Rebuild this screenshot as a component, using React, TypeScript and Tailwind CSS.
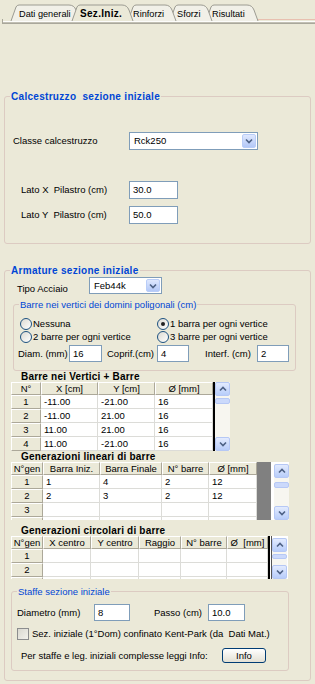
import type { ReactNode } from "react";
import clsx from "clsx";

const tabPath = (l: number, r: number) =>
  `M${l} 21 L${l + 5} 7 Q${l + 6} 5 ${l + 8} 5 L${r - 11} 5 Q${r - 6} 5 ${r - 4} 10 L${r} 21`;

function TabStrip() {
  // drawn right to left so the left tabs overlap, selected one last
  const back = [
    { l: 206, r: 258 },
    { l: 170, r: 212 },
    { l: 128, r: 176 },
    { l: 11, r: 80 },
  ];
  return (
    <div className="relative h-[25px]">
      <svg className="absolute inset-0" width="315" height="25">
        <rect x="258" y="19" width="57" height="1" fill="#e8c0b0" />
        {back.map((t) => (
          <g key={t.l}>
            <path d={tabPath(t.l, t.r) + " Z"} fill="#f1f0e8" />
            <path d={tabPath(t.l, t.r)} fill="none" stroke="#9c9b92" />
          </g>
        ))}
        <path d={tabPath(72, 133) + " Z"} fill="#ebe9d8" />
        <path d={tabPath(72, 133)} fill="none" stroke="#9c9b92" />
        <rect x="2" y="21" width="313" height="1" fill="#fdfdfb" />
        <rect x="2" y="22" width="313" height="1" fill="#c2c0b4" />
        <rect x="2" y="23" width="313" height="1" fill="#a9a79b" />
        <rect x="2" y="19" width="1" height="5" fill="#a9a79b" />
      </svg>
      <div className="relative flex pt-[8px] text-[9.2px]">
        <span className="w-[19px]" />
        <span className="w-[61px]">Dati generali</span>
        <span className="w-[53px] text-[10px] font-bold tracking-[0.3px]">Sez.Iniz.</span>
        <span className="w-[44px]">Rinforzi</span>
        <span className="w-[35px]">Sforzi</span>
        <span>Risultati</span>
      </div>
    </div>
  );
}

function Chevron({ up }: { up?: boolean }) {
  return (
    <svg width="8" height="6" viewBox="0 0 8 6">
      <path
        d={up ? "M1 4.5 L4 1.5 L7 4.5" : "M1 1.5 L4 4.5 L7 1.5"}
        fill="none"
        stroke="#4d6185"
        strokeWidth="1.6"
      />
    </svg>
  );
}

function Combo({ value, className }: { value: string; className: string }) {
  return (
    <div className={clsx("flex border border-[#7f9db9] bg-white p-px", className)}>
      <span className="flex-1 self-center pl-[3px]">{value}</span>
      <div className="flex w-[14px] items-center justify-center rounded-[2px] border border-[#b9cdf8] bg-gradient-to-b from-[#dfe8fe] to-[#b3c8f7]">
        <Chevron />
      </div>
    </div>
  );
}

function TextBox({ value, className }: { value: string; className: string }) {
  return (
    <div className={clsx("flex items-center border border-[#7f9db9] bg-white pl-[3px]", className)}>
      {value}
    </div>
  );
}

function Radio({ checked, label }: { checked?: boolean; label: string }) {
  return (
    <div className="flex h-[13px] items-center gap-[1px]">
      <span className="flex h-[12px] w-[12px] items-center justify-center rounded-full border border-[#1c5180] bg-gradient-to-br from-[#dcdad2] to-white">
        {checked && <span className="h-[4px] w-[4px] rounded-full bg-[#222]" />}
      </span>
      <span>{label}</span>
    </div>
  );
}

function Group({
  title,
  bold,
  className,
  children,
}: {
  title: string;
  bold?: boolean;
  className: string;
  children: ReactNode;
}) {
  return (
    <div className={clsx("rounded-[3px] border border-[#dccbc2]", className)}>
      <div
        className={clsx(
          "ml-[5px] w-fit bg-[#ebe9d8] px-px whitespace-pre text-[#0046d5]",
          bold
            ? "-mt-[7px] text-[10px] leading-[14px] font-bold tracking-[0.3px]"
            : "-mt-[6px] leading-[12px]",
        )}
      >
        {title}
      </div>
      {children}
    </div>
  );
}

function ScrollBar({ className, thumb }: { className: string; thumb: string }) {
  return (
    <div className={clsx("flex w-[15px] flex-col bg-[#f7f6f0]", className)}>
      <div className="flex h-[14px] shrink-0 items-center justify-center rounded-[2px] border border-[#b6c8f5] bg-gradient-to-b from-[#e3ebfe] to-[#b8cdfa]">
        <Chevron up />
      </div>
      <div className={clsx("shrink-0 rounded-[2px] border border-[#b6c8f5] bg-[#cbd9fb]", thumb)} />
      <div className="flex-1" />
      <div className="flex h-[14px] shrink-0 items-center justify-center rounded-[2px] border border-[#b6c8f5] bg-gradient-to-b from-[#e3ebfe] to-[#b8cdfa]">
        <Chevron />
      </div>
    </div>
  );
}

const headCell =
  "flex shrink-0 items-center justify-center overflow-hidden whitespace-pre border border-t-white border-l-white border-r-[#aca899] border-b-[#aca899] bg-[#ebe9d8]";
const dataCell =
  "flex shrink-0 items-center overflow-hidden border-r border-b border-[#dcdcd8] bg-white pl-[3px]";

function Grid({
  cols,
  rows,
  block,
}: {
  cols: { label: string; w: string }[];
  rows: string[][];
  block: string;
}) {
  return (
    <div className={clsx("flex flex-col overflow-hidden bg-white", block)}>
      <div className="flex h-[13px] shrink-0">
        {cols.map((c) => (
          <div key={c.label} className={clsx(headCell, c.w)}>
            {c.label}
          </div>
        ))}
      </div>
      {rows.map((r, ri) => (
        <div key={ri} className="flex h-[14px] shrink-0">
          {r.map((v, i) => (
            <div key={i} className={clsx(i === 0 ? headCell : dataCell, cols[i].w)}>
              {v}
            </div>
          ))}
        </div>
      ))}
    </div>
  );
}

export default function App() {
  return (
    <div className="h-[684px] w-[315px] overflow-hidden bg-[#ebe9d8] font-['Liberation_Sans',Arial,sans-serif] text-[9.5px] leading-[12px] text-black">
      <TabStrip />

      <Group title="Calcestruzzo  sezione iniziale" bold className="mt-[71px] ml-[4px] w-[307px] pb-[19px]">
        <div className="mt-[28px] flex h-[18px] items-center">
          <span className="ml-[8px] w-[116px]">Classe calcestruzzo</span>
          <Combo value="Rck250" className="h-[18px] w-[129px]" />
        </div>
        <div className="mt-[31px] flex h-[18px] items-center">
          <span className="ml-[16px] w-[108px] whitespace-pre">Lato X  Pilastro (cm)</span>
          <TextBox value="30.0" className="h-[18px] w-[49px]" />
        </div>
        <div className="mt-[7px] flex h-[18px] items-center">
          <span className="ml-[16px] w-[108px] whitespace-pre">Lato Y  Pilastro (cm)</span>
          <TextBox value="50.0" className="h-[18px] w-[49px]" />
        </div>
      </Group>

      <Group title="Armature sezione iniziale" bold className="mt-[26px] ml-[4px] w-[307px] pb-[9px]">
        <div className="-mt-px flex h-[17px] items-start">
          <span className="ml-[12px] w-[72px] pt-[6px]">Tipo Acciaio</span>
          <Combo value="Feb44k" className="h-[17px] w-[73px]" />
        </div>

        <Group title="Barre nei vertici dei domini poligonali (cm)" className="mt-[10px] ml-[8px] w-[283px] pb-[8px]">
          <div className="mt-[6px] ml-[6px] grid grid-cols-[137px_1fr]">
            <Radio label="Nessuna" />
            <Radio label="1 barra per ogni vertice" checked />
            <Radio label="2 barre per ogni vertice" />
            <Radio label="3 barre per ogni vertice" />
          </div>
          <div className="mt-[2px] flex h-[17px] items-center">
            <span className="ml-[4px] w-[51px]">Diam. (mm)</span>
            <TextBox value="16" className="h-[17px] w-[33px]" />
            <span className="w-[55px] pl-[5px]">Coprif.(cm)</span>
            <TextBox value="4" className="h-[17px] w-[32px]" />
            <span className="w-[68px] pl-[16px]">Interf. (cm)</span>
            <TextBox value="2" className="h-[17px] w-[32px]" />
          </div>
        </Group>

        <div className="ml-[16px] h-[11px] text-[10px] leading-[11px] font-bold tracking-[0.2px]">
          Barre nei Vertici + Barre
        </div>
        <div className="ml-[6px] flex h-[69px]">
          <Grid
            block="h-[69px] w-[202px]"
            cols={[
              { label: "N°", w: "w-[30px]" },
              { label: "X [cm]", w: "w-[57px]" },
              { label: "Y [cm]", w: "w-[57px]" },
              { label: "Ø [mm]", w: "w-[58px]" },
            ]}
            rows={[
              ["1", "-11.00", "-21.00", "16"],
              ["2", "-11.00", "21.00", "16"],
              ["3", "11.00", "21.00", "16"],
              ["4", "11.00", "-21.00", "16"],
            ]}
          />
          <div className="w-[2px] bg-black" />
          <ScrollBar className="h-[69px]" thumb="mt-[2px] h-[6px]" />
        </div>

        <div className="ml-[16px] h-[11px] text-[10px] leading-[11px] font-bold tracking-[0.2px]">
          Generazioni lineari di barre
        </div>
        <div className="ml-[6px] flex h-[58px] w-[278px] bg-white">
          <Grid
            block="h-[58px] w-[246px]"
            cols={[
              { label: "N°gen", w: "w-[32px]" },
              { label: "Barra Iniz.", w: "w-[57px]" },
              { label: "Barra Finale", w: "w-[62px]" },
              { label: "N° barre", w: "w-[47px]" },
              { label: "Ø [mm]", w: "w-[48px]" },
            ]}
            rows={[
              ["1", "1", "4", "2", "12"],
              ["2", "2", "3", "2", "12"],
              ["3", "", "", "", ""],
              ["", "", "", "", ""],
            ]}
          />
          <div className="w-[14px] bg-[#808080]" />
          <ScrollBar className="mt-[2px] ml-[3px] h-[56px]" thumb="mt-[4px] h-[6px]" />
        </div>

        <div className="mt-[5px] ml-[16px] h-[11px] text-[10px] leading-[11px] font-bold tracking-[0.2px]">
          Generazioni circolari di barre
        </div>
        <div className="ml-[6px] flex h-[43px] w-[277px] bg-white">
          <Grid
            block="h-[43px] w-[257px]"
            cols={[
              { label: "N°gen", w: "w-[32px]" },
              { label: "X centro", w: "w-[48px]" },
              { label: "Y centro", w: "w-[48px]" },
              { label: "Raggio", w: "w-[42px]" },
              { label: "N° barre", w: "w-[46px]" },
              { label: "Ø  [mm]", w: "w-[41px]" },
            ]}
            rows={[
              ["1", "", "", "", "", ""],
              ["2", "", "", "", "", ""],
              ["", "", "", "", "", ""],
            ]}
          />
          <div className="w-[4px] border-l-2 border-r border-l-black border-r-[#555] bg-white" />
          <ScrollBar className="mt-[2px] h-[41px]" thumb="mt-[2px] h-[5px]" />
        </div>

        <Group title="Staffe sezione iniziale" className="mt-[12px] ml-[6px] w-[278px] pb-[7px]">
          <div className="mt-[6px] flex h-[17px] items-center">
            <span className="ml-[5px] w-[77px]">Diametro (mm)</span>
            <TextBox value="8" className="h-[17px] w-[36px]" />
            <span className="w-[78px] pl-[24px]">Passo (cm)</span>
            <TextBox value="10.0" className="h-[17px] w-[37px]" />
          </div>
          <div className="mt-[6px] flex h-[13px] items-center">
            <span className="ml-[5px] h-[12px] w-[12px] border border-[#8c8d8e] bg-gradient-to-br from-[#d9d8d0] to-[#f3f2ec]" />
            <span className="ml-[3px] whitespace-pre">Sez. iniziale (1°Dom) confinato Kent-Park (da  Dati Mat.)</span>
          </div>
          <div className="mt-[8px] flex h-[15px] items-center">
            <span className="ml-[9px] w-[201px]">Per staffe e leg. iniziali complesse leggi Info:</span>
            <button className="flex h-[15px] w-[44px] items-center justify-center rounded-[3px] border border-[#003c74] bg-gradient-to-b from-white to-[#e3e0d4]">
              Info
            </button>
          </div>
        </Group>
      </Group>
    </div>
  );
}
